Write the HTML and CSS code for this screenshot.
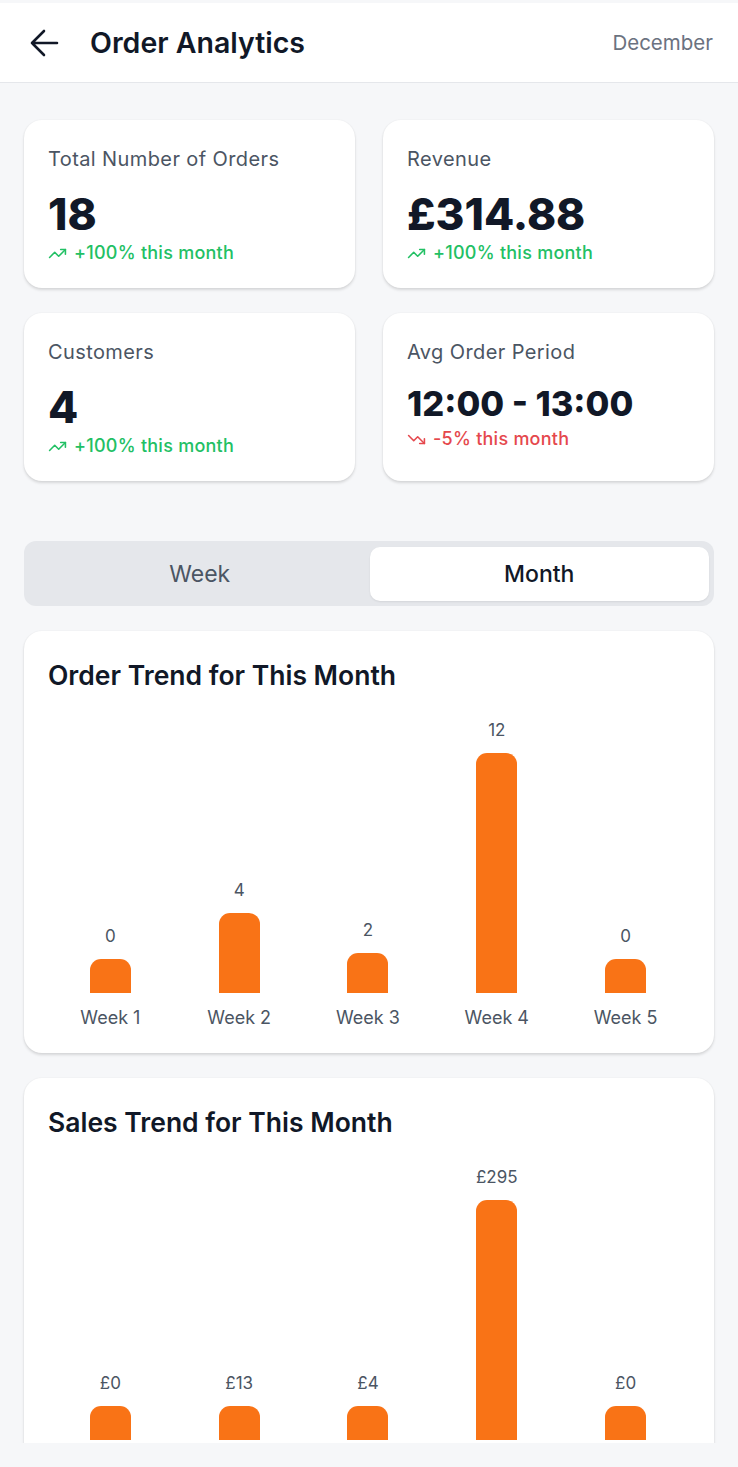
FILE: index.html
```html
<!DOCTYPE html>
<html lang="en">
<head>
<meta charset="utf-8">
<title>Order Analytics</title>
<link rel="stylesheet" href="styles.css">
</head>
<body>
<div class="app">
  <div class="status-strip"></div>
  <header class="topbar">
    <svg class="back" width="30" height="30" viewBox="0 0 30 30" fill="none" stroke="#111827" stroke-width="2.6" stroke-linecap="round" stroke-linejoin="round"><path d="M28 15H3M15 3L3 15l12 12"/></svg>
    <h1 class="title">Order Analytics</h1>
    <span class="month-label">December</span>
  </header>
  <main class="content">
    <section class="stats">
      <div class="card stat">
        <div class="stat-label">Total Number of Orders</div>
        <div class="stat-value">18</div>
        <div class="stat-change up">
          <svg viewBox="0 0 24 24" fill="none" stroke="currentColor" stroke-width="2" stroke-linecap="round" stroke-linejoin="round"><polyline points="22 7 13.5 15.5 8.5 10.5 2 17"/><polyline points="16 7 22 7 22 13"/></svg>
          <span>+100% this month</span>
        </div>
      </div>
      <div class="card stat">
        <div class="stat-label">Revenue</div>
        <div class="stat-value">£314.88</div>
        <div class="stat-change up">
          <svg viewBox="0 0 24 24" fill="none" stroke="currentColor" stroke-width="2" stroke-linecap="round" stroke-linejoin="round"><polyline points="22 7 13.5 15.5 8.5 10.5 2 17"/><polyline points="16 7 22 7 22 13"/></svg>
          <span>+100% this month</span>
        </div>
      </div>
      <div class="card stat">
        <div class="stat-label">Customers</div>
        <div class="stat-value">4</div>
        <div class="stat-change up">
          <svg viewBox="0 0 24 24" fill="none" stroke="currentColor" stroke-width="2" stroke-linecap="round" stroke-linejoin="round"><polyline points="22 7 13.5 15.5 8.5 10.5 2 17"/><polyline points="16 7 22 7 22 13"/></svg>
          <span>+100% this month</span>
        </div>
      </div>
      <div class="card stat">
        <div class="stat-label">Avg Order Period</div>
        <div class="stat-value small">12:00 - 13:00</div>
        <div class="stat-change down">
          <svg viewBox="0 0 24 24" fill="none" stroke="currentColor" stroke-width="2" stroke-linecap="round" stroke-linejoin="round"><polyline points="22 17 13.5 8.5 8.5 13.5 2 7"/><polyline points="16 17 22 17 22 11"/></svg>
          <span>-5% this month</span>
        </div>
      </div>
    </section>

    <div class="segmented">
      <button class="seg">Week</button>
      <button class="seg active">Month</button>
    </div>

    <section class="card chart-card">
      <h2 class="chart-title">Order Trend for This Month</h2>
      <div class="chart">
        <div class="col"><span class="val">0</span><div class="bar" style="height:34px"></div><span class="lbl">Week 1</span></div>
        <div class="col"><span class="val">4</span><div class="bar" style="height:80px"></div><span class="lbl">Week 2</span></div>
        <div class="col"><span class="val">2</span><div class="bar" style="height:40px"></div><span class="lbl">Week 3</span></div>
        <div class="col"><span class="val">12</span><div class="bar" style="height:240px"></div><span class="lbl">Week 4</span></div>
        <div class="col"><span class="val">0</span><div class="bar" style="height:34px"></div><span class="lbl">Week 5</span></div>
      </div>
    </section>

    <section class="card chart-card">
      <h2 class="chart-title">Sales Trend for This Month</h2>
      <div class="chart">
        <div class="col"><span class="val">£0</span><div class="bar" style="height:34px"></div></div>
        <div class="col"><span class="val">£13</span><div class="bar" style="height:34px"></div></div>
        <div class="col"><span class="val">£4</span><div class="bar" style="height:34px"></div></div>
        <div class="col"><span class="val">£295</span><div class="bar" style="height:240px"></div></div>
        <div class="col"><span class="val">£0</span><div class="bar" style="height:34px"></div></div>
      </div>
    </section>
  </main>
  <div class="bottom-strip"></div>
</div>
</body>
</html>
```
FILE: styles.css
```css
* { box-sizing: border-box; margin: 0; padding: 0; }
html, body { width: 738px; height: 1467px; overflow: hidden; }
body {
  background: #f6f7f9;
  font-family: Inter, "Noto Sans", "Liberation Sans", sans-serif;
  color: #111827;
}
.app {
  height: 1467px;
  display: flex;
  flex-direction: column;
}
.status-strip { height: 3px; background: #f6f7f9; flex: none; }
.bottom-strip { height: 24px; background: #f6f7f9; flex: none; }
.topbar {
  flex: none;
  height: 80px;
  background: #ffffff;
  border-bottom: 1px solid #e5e7eb;
  display: flex;
  align-items: center;
  padding: 0 25px 0 29px;
}
.back { flex: none; }
.title {
  margin-left: 31px;
  font-size: 28.5px;
  font-weight: 600;
  color: #111827;
  flex: 1;
}
.month-label {
  font-size: 20.5px;
  color: #6b7280;
}
.content {
  flex: 1;
  min-height: 0;
  overflow: hidden;
  padding: 37px 24px 0 24px;
  display: flex;
  flex-direction: column;
}
.content > * { flex: none; }
.card {
  background: #ffffff;
  border-radius: 18px;
  box-shadow: 0 2px 3px rgba(0,0,0,0.13), 0 0 2px rgba(0,0,0,0.06);
}
.stats {
  display: grid;
  grid-template-columns: 1fr 1fr;
  column-gap: 28px;
  row-gap: 25px;
}
.stat {
  height: 168px;
  padding: 26px 24px 0 24px;
  display: flex;
  flex-direction: column;
}
.stat-label {
  font-size: 20px;
  line-height: 26px;
  letter-spacing: 0.4px;
  color: #4b5563;
}
.stat-value {
  margin-top: 18px;
  font-size: 44px;
  line-height: 48px;
  font-weight: 800;
  color: #111827;
}
.stat-value.small {
  font-size: 34.5px;
  line-height: 40px;
  margin-top: 19px;
}
.stat-change {
  margin-top: 3px;
  display: flex;
  align-items: center;
  gap: 7px;
  font-size: 18px;
  line-height: 24px;
  letter-spacing: 0.25px;
  font-weight: 500;
}
.stat-change svg { width: 19px; height: 19px; flex: none; }
.stat-change.up { color: #22c064; }
.stat-change.down { color: #e5484d; }

.segmented {
  margin-top: 60px;
  height: 65px;
  background: #e5e7eb;
  border-radius: 12px;
  padding: 6px 5px 5px 6px;
  display: grid;
  grid-template-columns: 1fr 1fr;
}
.seg {
  border: none;
  background: transparent;
  font-family: inherit;
  font-size: 23px;
  font-weight: 400;
  color: #4b5563;
  border-radius: 10px;
}
.seg.active {
  background: #ffffff;
  color: #111827;
  font-weight: 500;
  box-shadow: 0 1px 2px rgba(0,0,0,0.08);
}

.chart-card {
  margin-top: 25px;
  padding: 28px 24px 24px 24px;
}
.chart-title {
  font-size: 26.5px;
  line-height: 32px;
  font-weight: 600;
  color: #111827;
}
.chart {
  margin: 28px 0 0 -2px;
  display: grid;
  grid-template-columns: repeat(5, 1fr);
}
.col {
  height: 310px;
  display: flex;
  flex-direction: column;
  align-items: center;
}
.val {
  margin-top: auto;
  font-size: 17px;
  line-height: 22px;
  color: #4b5563;
  margin-bottom: 12px;
}
.bar {
  width: 41px;
  background: #f97316;
  border-radius: 11px 11px 0 0;
}
.lbl {
  margin-top: 14px;
  font-size: 18px;
  line-height: 22px;
  color: #4b5563;
}
.chart-card + .chart-card .col { height: 274px; }
```
